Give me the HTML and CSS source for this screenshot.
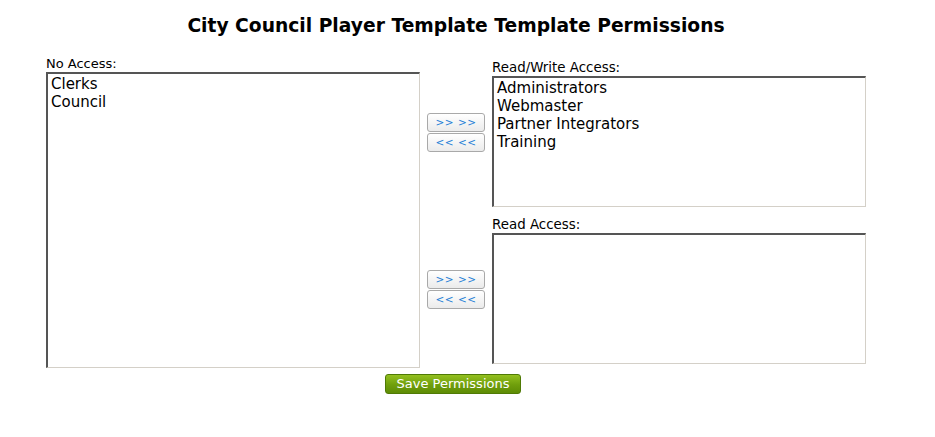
FILE: index.html
```html
<!DOCTYPE html>
<html lang="en">
<head>
<meta charset="utf-8">
<title>Template Permissions</title>
<link rel="stylesheet" href="styles.css">
</head>
<body>
<div class="page">
  <h1 class="title">City Council Player Template Template Permissions</h1>
  <div class="perm-grid">
    <div class="col-left">
      <div class="label">No Access:</div>
      <div class="listbox listbox-tall" role="listbox">
        <div class="option">Clerks</div>
        <div class="option">Council</div>
      </div>
    </div>

    <div class="mover mover-1">
      <button class="move-btn" type="button">&gt;&gt; &gt;&gt;</button>
      <button class="move-btn" type="button">&lt;&lt; &lt;&lt;</button>
    </div>
    <div class="col-right col-right-1">
      <div class="label">Read/Write Access:</div>
      <div class="listbox listbox-short" role="listbox">
        <div class="option">Administrators</div>
        <div class="option">Webmaster</div>
        <div class="option">Partner Integrators</div>
        <div class="option">Training</div>
      </div>
    </div>

    <div class="mover mover-2">
      <button class="move-btn" type="button">&gt;&gt; &gt;&gt;</button>
      <button class="move-btn" type="button">&lt;&lt; &lt;&lt;</button>
    </div>
    <div class="col-right col-right-2">
      <div class="label">Read Access:</div>
      <div class="listbox listbox-short" role="listbox"></div>
    </div>
  </div>
  <div class="actions">
    <button class="save-btn" type="button">Save Permissions</button>
  </div>
</div>
</body>
</html>
```

FILE: styles.css
```css
html, body {
  margin: 0;
  padding: 0;
  background: #ffffff;
}

body {
  font-family: "DejaVu Sans", Verdana, sans-serif;
  color: #000;
}

.page {
  width: 820px;
  margin-left: 46px;
  padding-top: 15px;
}

.title {
  margin: 0;
  font-size: 18.7px;
  font-weight: bold;
  line-height: 22px;
  text-align: center;
}

.perm-grid {
  margin-top: 18px;
  display: grid;
  grid-template-columns: 374px 72px 374px;
  grid-template-rows: 152px 1fr;
  row-gap: 9px;
}

.col-left {
  grid-column: 1;
  grid-row: 1 / span 2;
}

.col-right-1 {
  grid-column: 3;
  grid-row: 1;
  padding-top: 4px;
}

.col-right-2 {
  grid-column: 3;
  grid-row: 2;
}

.mover {
  grid-column: 2;
  display: flex;
  flex-direction: column;
  align-items: center;
  justify-content: center;
  gap: 1px;
}

.mover-1 { grid-row: 1; padding-top: 2px; }
.mover-2 { grid-row: 2; padding-bottom: 5px; }

.label {
  font-size: 13px;
  line-height: 17px;
  white-space: nowrap;
}

.col-right .label {
  font-size: 13.4px;
}

.listbox {
  box-sizing: border-box;
  border-style: solid;
  border-width: 2px 1px 1px 2px;
  border-color: #555555 #d4d0c8 #d4d0c8 #555555;
  background: #fff;
  padding: 1px 3px;
  font-size: 15px;
  line-height: 18px;
}

.listbox-tall {
  height: 296px;
}

.listbox-short {
  height: 131px;
}

.option {
  white-space: nowrap;
}

.move-btn {
  box-sizing: border-box;
  width: 58px;
  height: 19px;
  padding: 0;
  margin: 0;
  border: 1px solid #a9a9a9;
  border-radius: 3px;
  background: linear-gradient(#ffffff, #ebebeb);
  color: #1f7fd6;
  font-family: "DejaVu Sans", Verdana, sans-serif;
  font-size: 10.5px;
  line-height: 17px;
  letter-spacing: 0.5px;
}

.actions {
  display: flex;
  justify-content: center;
  margin-top: 6px;
  padding-right: 6px;
}

.save-btn {
  box-sizing: border-box;
  width: 136px;
  height: 20px;
  padding: 0;
  margin: 0;
  border: 1px solid #4f7a05;
  border-radius: 3px;
  background: linear-gradient(#93c01f, #6f9e0c 55%, #5e8c05);
  color: #ffffff;
  font-family: "DejaVu Sans", Verdana, sans-serif;
  font-size: 13px;
  line-height: 18px;
}
```
